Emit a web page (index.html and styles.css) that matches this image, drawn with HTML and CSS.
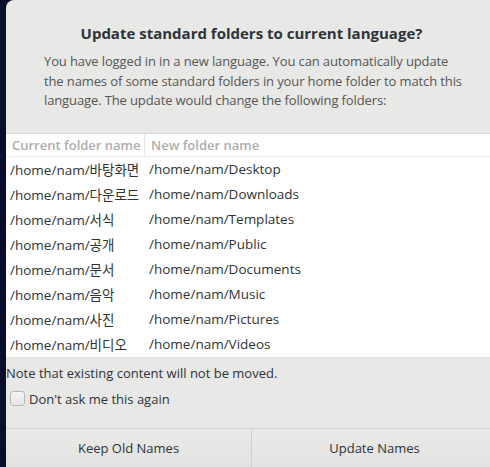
FILE: index.html
```html
<!DOCTYPE html>
<html>
<head>
<meta charset="utf-8">
<link rel="stylesheet" href="styles.css">
</head>
<body>
<div class="dialog">
  <div class="title">Update standard folders to current language?</div>
  <div class="desc">You have logged in in a new language. You can automatically update<br>the names of some standard folders in your home folder to match this<br>language. The update would change the following folders:</div>
  <div class="table">
    <div class="row head">
      <div class="c1">Current folder name</div>
      <div class="c2">New folder name</div>
    </div>
    <div class="row"><div class="c1">/home/nam/바탕화면</div><div class="c2">/home/nam/Desktop</div></div>
    <div class="row"><div class="c1">/home/nam/다운로드</div><div class="c2">/home/nam/Downloads</div></div>
    <div class="row"><div class="c1">/home/nam/서식</div><div class="c2">/home/nam/Templates</div></div>
    <div class="row"><div class="c1">/home/nam/공개</div><div class="c2">/home/nam/Public</div></div>
    <div class="row"><div class="c1">/home/nam/문서</div><div class="c2">/home/nam/Documents</div></div>
    <div class="row"><div class="c1">/home/nam/음악</div><div class="c2">/home/nam/Music</div></div>
    <div class="row"><div class="c1">/home/nam/사진</div><div class="c2">/home/nam/Pictures</div></div>
    <div class="row"><div class="c1">/home/nam/비디오</div><div class="c2">/home/nam/Videos</div></div>
  </div>
  <div class="note">Note that existing content will not be moved.</div>
  <label class="check"><span class="box"></span><span>Don't ask me this again</span></label>
  <div class="buttons">
    <div class="btn">Keep Old Names</div>
    <div class="btn">Update Names</div>
  </div>
</div>
</body>
</html>
```
FILE: styles.css
```css
html, body {
  margin: 0;
  padding: 0;
  overflow: hidden;
}
body {
  background: #0b0e2a;
  width: 490px;
  height: 467px;
  font-family: "Open Sans", "Noto Sans CJK KR", sans-serif;
}
.dialog {
  margin-left: 6px;
  width: 491px;
  height: 467px;
  background: #e8e8e7;
  border-top-left-radius: 8px;
  display: flex;
  flex-direction: column;
  color: #2e3436;
}
.title {
  margin-top: 22px;
  text-align: center;
  font-weight: bold;
  font-size: 15px;
  line-height: 22px;
  color: #2e3436;
}
.desc {
  margin-top: 8px;
  padding: 0 20px 0 38px;
  font-size: 13px;
  line-height: 19.5px;
  letter-spacing: -0.12px;
  white-space: nowrap;
  color: #555753;
}
.table {
  margin-top: 22px;
  background: #fff;
  border-top: 1px solid #d6d6d4;
  border-bottom: 1px solid #e2e2e0;
}
.row {
  display: flex;
  height: 25px;
  align-items: center;
  font-size: 13.5px;
  color: #2e3436;
}
.row.head {
  height: 22px;
  border-bottom: 1px solid #ececec;
  color: #adadad;
  font-weight: 600;
  font-size: 13px;
}
.c1 {
  width: 139px;
  padding-left: 4px;
  box-sizing: border-box;
  height: 100%;
  display: flex;
  align-items: center;
}
.head .c1 {
  padding-left: 6px;
  border-right: 1px solid #e6e6e6;
}
.c2 {
  padding-left: 4px;
  height: 100%;
  display: flex;
  align-items: center;
}
.head .c2 {
  padding-left: 6px;
}
.note {
  margin-top: 6px;
  font-size: 13px;
  line-height: 18px;
}
.check {
  margin-top: 8px;
  display: flex;
  align-items: center;
  font-size: 13px;
  padding-left: 4px;
}
.box {
  width: 13px;
  height: 13px;
  border: 1px solid #b6b6b3;
  border-radius: 3px;
  background: linear-gradient(#f4f4f4, #e6e6e6);
  margin-right: 4px;
}
.buttons {
  margin-top: auto;
  display: flex;
  height: 38px;
  border-top: 1px solid #cfcfcd;
}
.btn {
  flex: 1;
  display: flex;
  align-items: center;
  justify-content: center;
  font-size: 13px;
  color: #2e3436;
  background: linear-gradient(#eaeae9, #e2e2e1);
}
.btn + .btn {
  border-left: 1px solid #cfcfcd;
}
```
